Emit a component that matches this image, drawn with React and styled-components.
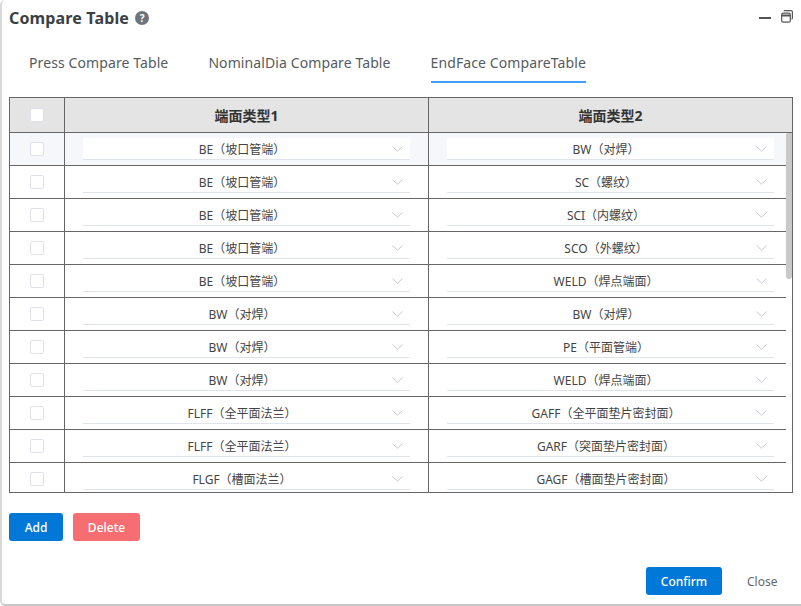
import React from "react";
import styled, { createGlobalStyle } from "styled-components";

const Global = createGlobalStyle`
  html, body { margin: 0; padding: 0; background: #fff; }
  body { font-family: "Noto Sans", "Noto Sans CJK SC", sans-serif; color: #333; }
  * { box-sizing: border-box; }
`;

const Dialog = styled.div`
  width: 801px;
  height: 606px;
  background: #fff;
  border-left: 2px solid #d8d8d8;
  border-bottom: 2px solid #c8c8c8;
  border-radius: 5px 0 0 5px;
  display: flex;
  flex-direction: column;
  padding: 0 8px 9px 7px;
`;

const Header = styled.header`
  height: 35px;
  display: flex;
  align-items: center;
  gap: 6px;
`;

const Title = styled.h2`
  margin: 0;
  font-size: 16px;
  font-weight: 700;
  letter-spacing: 0.15px;
  color: #3a3f46;
  line-height: 22px;
`;

const Help = styled.span`
  width: 14px;
  height: 14px;
  border-radius: 50%;
  background: #6c757d;
  color: #fff;
  font-size: 10px;
  font-weight: 700;
  line-height: 14px;
  text-align: center;
`;

const WindowTools = styled.div`
  margin-left: auto;
  margin-bottom: 2px;
  display: flex;
  align-items: center;
  gap: 10px;
  color: #555;
`;

const Tabs = styled.nav`
  height: 48px;
  margin-left: 20px;
  display: flex;
  gap: 40px;
`;

const Tab = styled.a`
  height: 48px;
  font-size: 14px;
  letter-spacing: 0.1px;
  line-height: 55px;
  color: #555b61;
  border-bottom: 2px solid ${(p) => (p.$active ? "#409eff" : "transparent")};
`;

const TableFrame = styled.div`
  margin-top: 14px;
  height: 396px;
  border: 1px solid #666;
  display: flex;
  flex-direction: column;
`;

const HeadRow = styled.div`
  height: 35px;
  flex: none;
  display: grid;
  grid-template-columns: 54px 364px 364px;
  background: #e4e4e4;
  border-bottom: 1px solid #666;
`;

const HeadCell = styled.div`
  display: flex;
  align-items: center;
  justify-content: center;
  font-size: 14px;
  font-weight: 700;
  color: #333;
  border-left: ${(p) => (p.$first ? "none" : "1px solid #666")};
`;

const Body = styled.div`
  position: relative;
  flex: 1;
  min-height: 0;
  overflow: hidden;
`;

const ScrollTrack = styled.div`
  position: absolute;
  top: 0;
  right: 0;
  bottom: 0;
  width: 6px;
  background: #fff;
`;

const ScrollThumb = styled.div`
  height: 146px;
  background: #c9c9c9;
  border-radius: 2px 0 4px 4px;
`;

const Row = styled.div`
  height: 33px;
  display: grid;
  grid-template-columns: 54px 364px 364px;
  background: ${(p) => (p.$active ? "#f5f7fb" : "#fff")};
  border-bottom: 1px solid #666;
`;

const Cell = styled.div`
  display: flex;
  align-items: center;
  justify-content: center;
  padding-bottom: 1px;
  border-left: ${(p) => (p.$first ? "none" : "1px solid #666")};
`;

const Check = styled.span`
  width: 14px;
  height: 14px;
  display: block;
  background: #fff;
  border: 1px solid #dfe1ea;
  border-radius: 2px;
`;

const Select = styled.div`
  width: 327px;
  height: 22px;
  position: relative;
  background: #fff;
  border-bottom: 1px solid #dfe3ec;
  padding: 0 9px 0 0;
  font-size: 12px;
  line-height: 23px;
  color: #444;
  text-align: center;
  white-space: nowrap;
`;

const Chevron = styled.svg`
  position: absolute;
  right: 7px;
  top: 8px;
  width: 11px;
  height: 6px;
  fill: none;
  stroke: #c5c9d3;
  stroke-width: 1;
`;

const ActionBar = styled.div`
  margin-top: 20px;
  display: flex;
  gap: 10px;
`;

const Button = styled.button`
  height: 28px;
  width: ${(p) => p.$w}px;
  padding: 0;
  border: none;
  border-radius: 3px;
  background: ${(p) => p.$bg};
  color: #fff;
  font-family: inherit;
  font-size: 12px;
  font-weight: 500;
`;

const Footer = styled.footer`
  margin-top: auto;
  display: flex;
  justify-content: flex-end;
  align-items: center;
`;

const CloseLink = styled.span`
  width: 71px;
  padding-left: 25px;
  font-size: 12px;
  color: #666;
`;

const data = [
  ["BE（坡口管端）", "BW（对焊）"],
  ["BE（坡口管端）", "SC（螺纹）"],
  ["BE（坡口管端）", "SCI（内螺纹）"],
  ["BE（坡口管端）", "SCO（外螺纹）"],
  ["BE（坡口管端）", "WELD（焊点端面）"],
  ["BW（对焊）", "BW（对焊）"],
  ["BW（对焊）", "PE（平面管端）"],
  ["BW（对焊）", "WELD（焊点端面）"],
  ["FLFF（全平面法兰）", "GAFF（全平面垫片密封面）"],
  ["FLFF（全平面法兰）", "GARF（突面垫片密封面）"],
  ["FLGF（槽面法兰）", "GAGF（槽面垫片密封面）"],
];

const Dropdown = ({ value }) => (
  <Select>
    {value}
    <Chevron viewBox="0 0 11 6"><path d="M.5 .5 5.5 5.2 10.5 .5" /></Chevron>
  </Select>
);

export default function App() {
  return (
    <>
      <Global />
      <Dialog>
        <Header>
          <Title>Compare Table</Title>
          <Help>?</Help>
          <WindowTools>
            <svg width="12" height="12" viewBox="0 0 12 12"><path d="M0 7h12" stroke="currentColor" strokeWidth="2" /></svg>
            <svg width="12" height="13" viewBox="0 0 12 13" fill="none" stroke="currentColor" strokeWidth="1.2">
              <rect x=".7" y="3.2" width="8.6" height="9" rx="1.5" />
              <path d="M.7 5.5h8.6" strokeWidth="2" />
              <path d="M3.2 1.2q0-.6.8-.6h6q1.4 0 1.4 1.4v6q0 1-1 1" />
            </svg>
          </WindowTools>
        </Header>
        <Tabs>
          <Tab>Press Compare Table</Tab>
          <Tab>NominalDia Compare Table</Tab>
          <Tab $active>EndFace CompareTable</Tab>
        </Tabs>
        <TableFrame>
          <HeadRow>
            <HeadCell $first><Check /></HeadCell>
            <HeadCell>端面类型1</HeadCell>
            <HeadCell>端面类型2</HeadCell>
          </HeadRow>
          <Body>
            {data.map(([a, b], i) => (
              <Row key={i} $active={i === 0}>
                <Cell $first><Check /></Cell>
                <Cell><Dropdown value={a} /></Cell>
                <Cell><Dropdown value={b} /></Cell>
              </Row>
            ))}
            <ScrollTrack><ScrollThumb /></ScrollTrack>
          </Body>
        </TableFrame>
        <ActionBar>
          <Button $bg="#0078d7" $w={54}>Add</Button>
          <Button $bg="#f76e72" $w={67}>Delete</Button>
        </ActionBar>
        <Footer>
          <Button $bg="#0078d7" $w={76}>Confirm</Button>
          <CloseLink>Close</CloseLink>
        </Footer>
      </Dialog>
    </>
  );
}
